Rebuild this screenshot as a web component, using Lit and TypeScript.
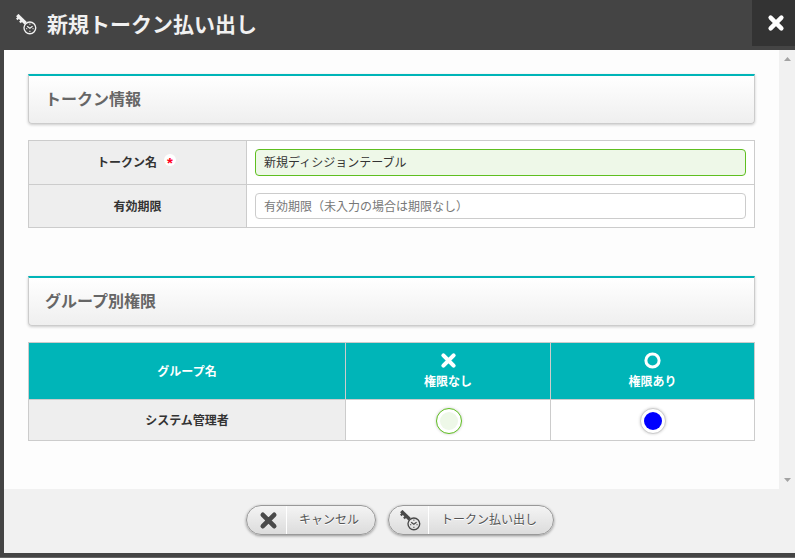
import { LitElement, html, css, svg } from "lit";
import { customElement, property } from "lit/decorators.js";

const cross = svg`<path d="M3.6 3.6L14.4 14.4M14.4 3.6L3.6 14.4" fill="none" stroke="currentColor" stroke-width="4.4"/>`;
const ring = svg`<circle cx="9" cy="9" r="7" fill="none" stroke="currentColor" stroke-width="3.2"/>`;
const key = svg`
  <path d="M1.2 1L9.2 8.8" fill="none" stroke="currentColor" stroke-width="3.2"/>
  <path d="M3.2 2.4L.8 5.2M6.2 5.2L3.8 8" fill="none" stroke="currentColor" stroke-width="2.2"/>
  <circle cx="13.2" cy="13.2" r="5.6" fill="none" stroke="currentColor" stroke-width="1.3"/>
  <path d="M10.6 11.6l2.6 2 2.6-2" fill="none" stroke="currentColor" stroke-width="1.2"/>
  <path d="M12.6 9.6h1.2M9.6 14h1.1M15.7 14h1.1M12.6 16.6h1.2" fill="none" stroke="currentColor" stroke-width="1.1" opacity=".8"/>`;
const glyphs: Record<string, [string, unknown]> = {
  cross: ["0 0 18 18", cross],
  ring: ["0 0 18 18", ring],
  key: ["0 0 20 20", key],
};

@customElement("ui-glyph")
class UiGlyph extends LitElement {
  @property() name = "cross";
  static styles = css`
    :host { display: block; width: 18px; height: 18px; }
    svg { display: block; width: 100%; height: 100%; stroke-linecap: round; }
    .key { stroke-linecap: butt; }
  `;
  render() {
    const [box, shape] = glyphs[this.name];
    return html`<svg class=${this.name} viewBox=${box} aria-hidden="true">${shape}</svg>`;
  }
}

@customElement("pill-button")
class PillButton extends LitElement {
  @property() icon = "cross";
  @property() label = "";
  static styles = css`
    :host { display: block; }
    button {
      display: flex; align-items: stretch; box-sizing: border-box; height: 30px; padding: 0;
      border: 1px solid #999; border-radius: 15px; overflow: hidden;
      background: linear-gradient(#f4f4f4, #dcdcdc);
      box-shadow: 0 1px 3px rgba(0, 0, 0, .4);
      color: #555; font: 12px/26px "Noto Sans CJK JP", sans-serif;
    }
    .icon {
      display: flex; align-items: center; justify-content: center; box-sizing: border-box;
      width: 40px; padding-left: 5px; border-right: 1px solid #fff; color: #4a4a4a;
    }
    .cross ui-glyph { width: 19px; height: 19px; }
    .key { padding-left: 4px; }
    .key ui-glyph { width: 21px; height: 21px; }
    .text { padding: 0 16px 0 12px; text-shadow: 0 1px 0 #fff; }
  `;
  render() {
    return html`<button>
      <span class="icon ${this.icon}"><ui-glyph name=${this.icon}></ui-glyph></span>
      <span class="text">${this.label}</span>
    </button>`;
  }
}

@customElement("app-root")
class AppRoot extends LitElement {
  static styles = css`
    :host {
      display: flex; flex-direction: column; box-sizing: border-box; height: 558px;
      background: #444; color: #333; overflow: hidden;
      font: 12px/18px "Noto Sans CJK JP", sans-serif;
    }
    header { display: flex; height: 50px; flex: none; color: #f1f1f1; }
    .mark { width: 21px; height: 21px; margin: 14px 0 0 16px; }
    h1 { flex: 1; margin: 0 0 0 10px; font-size: 21px; line-height: 46px; font-weight: 700; }
    .close {
      width: 43px; height: 46px; padding: 0; border: 0; background: #333; color: #fff;
      display: flex; align-items: center; justify-content: center;
    }
    .close ui-glyph { margin-left: 5px; }
    .body { display: flex; height: 439px; flex: none; margin-left: 4px; background: #fdfdfd; }
    .content { flex: 1; box-sizing: border-box; padding: 24px 24px 0; }
    .scroll {
      width: 16px; box-sizing: border-box; padding: 7px 0 7px 5px; background: #f1f1f1;
      display: flex; flex-direction: column; justify-content: space-between;
    }
    .up, .down { width: 7px; height: 4px; background: #a3a3a3; }
    .up { clip-path: polygon(50% 0, 100% 100%, 0 100%); }
    .down { clip-path: polygon(0 0, 100% 0, 50% 100%); }
    h2 {
      box-sizing: border-box; height: 50px; margin: 0; padding-left: 16px;
      border: 1px solid #ccc; border-top: 2px solid #00b5b8; border-radius: 0 0 4px 4px;
      background: linear-gradient(#fff, #efefef); box-shadow: 0 1px 3px rgba(0, 0, 0, .2);
      color: #666; font-size: 16px; line-height: 45px; font-weight: 700;
    }
    .grid {
      display: grid; box-sizing: border-box; gap: 1px; padding: 1px; background: #ccc; margin-top: 16px;
    }
    .fields { grid-template: 43px 42px / 217px 1fr; }
    .groups { grid-template: 56px 40px / 316px 204px 1fr; }
    .second { margin-top: 48px; }
    .cell { display: flex; align-items: center; justify-content: center; background: #fff; min-width: 0; }
    .label { background: #eee; font-weight: 700; }
    .named { padding: 0 2px 2px 0; }
    .head { flex-direction: column; background: #00b5b8; color: #fff; font-weight: 700; }
    .choice { padding-bottom: 3px; }
    .choice ui-glyph { width: 17px; height: 17px; margin: 2px 0 3px; }
    .required {
      width: 12px; height: 12px; margin: -3px 0 0 7px; border-radius: 50%; background: #fff;
      color: #f02; text-align: center; font: 700 15px/17px "Liberation Sans", sans-serif;
    }
    .field { padding: 0 8px; }
    input {
      box-sizing: border-box; width: 100%; height: 26px; padding: 0 8px 2px; border: 1px solid #ccc;
      border-radius: 4px; background: #fff; color: #333; font: inherit; outline: none;
    }
    input::placeholder { color: #777; opacity: 1; }
    .filled { height: 27px; border-color: #5fbf20; background: #eef8e8; }
    .pick { padding: 2px 0 0 1px; }
    .radio {
      box-sizing: border-box; width: 26px; height: 26px; border: 1px solid #ccc; border-radius: 50%;
      padding: 3px; background: #fff; box-shadow: 0 0 3px rgba(0, 0, 0, .2);
    }
    .dot { width: 18px; height: 18px; border-radius: 50%; background: #00f; }
    .focus { border-color: #5fbf20; }
    .focus .dot { background: #eef8e8; }
    footer {
      display: flex; justify-content: center; gap: 12px; box-sizing: border-box; height: 64px;
      flex: none; padding: 16px 0 0 1px; margin-left: 4px; background: #f1f1f1;
    }
    .base { height: 4px; border-bottom: 1px solid #666; }
  `;
  render() {
    return html`
      <header>
        <ui-glyph class="mark" name="key"></ui-glyph>
        <h1>新規トークン払い出し</h1>
        <button class="close" aria-label="閉じる"><ui-glyph></ui-glyph></button>
      </header>
      <div class="body">
        <main class="content">
          <h2>トークン情報</h2>
          <div class="grid fields">
            <div class="cell label named">トークン名<span class="required">*</span></div>
            <div class="cell field"><input class="filled" .value=${"新規ディシジョンテーブル"}></div>
            <div class="cell label">有効期限</div>
            <div class="cell field"><input placeholder="有効期限（未入力の場合は期限なし）"></div>
          </div>
          <h2 class="second">グループ別権限</h2>
          <div class="grid groups">
            <div class="cell head">グループ名</div>
            <div class="cell head choice"><ui-glyph></ui-glyph>権限なし</div>
            <div class="cell head choice"><ui-glyph name="ring"></ui-glyph>権限あり</div>
            <div class="cell label">システム管理者</div>
            <div class="cell pick"><div class="radio focus"><div class="dot"></div></div></div>
            <div class="cell pick"><div class="radio"><div class="dot"></div></div></div>
          </div>
        </main>
        <div class="scroll"><div class="up"></div><div class="down"></div></div>
      </div>
      <footer>
        <pill-button icon="cross" label="キャンセル"></pill-button>
        <pill-button icon="key" label="トークン払い出し"></pill-button>
      </footer>
      <div class="base"></div>
    `;
  }
}
